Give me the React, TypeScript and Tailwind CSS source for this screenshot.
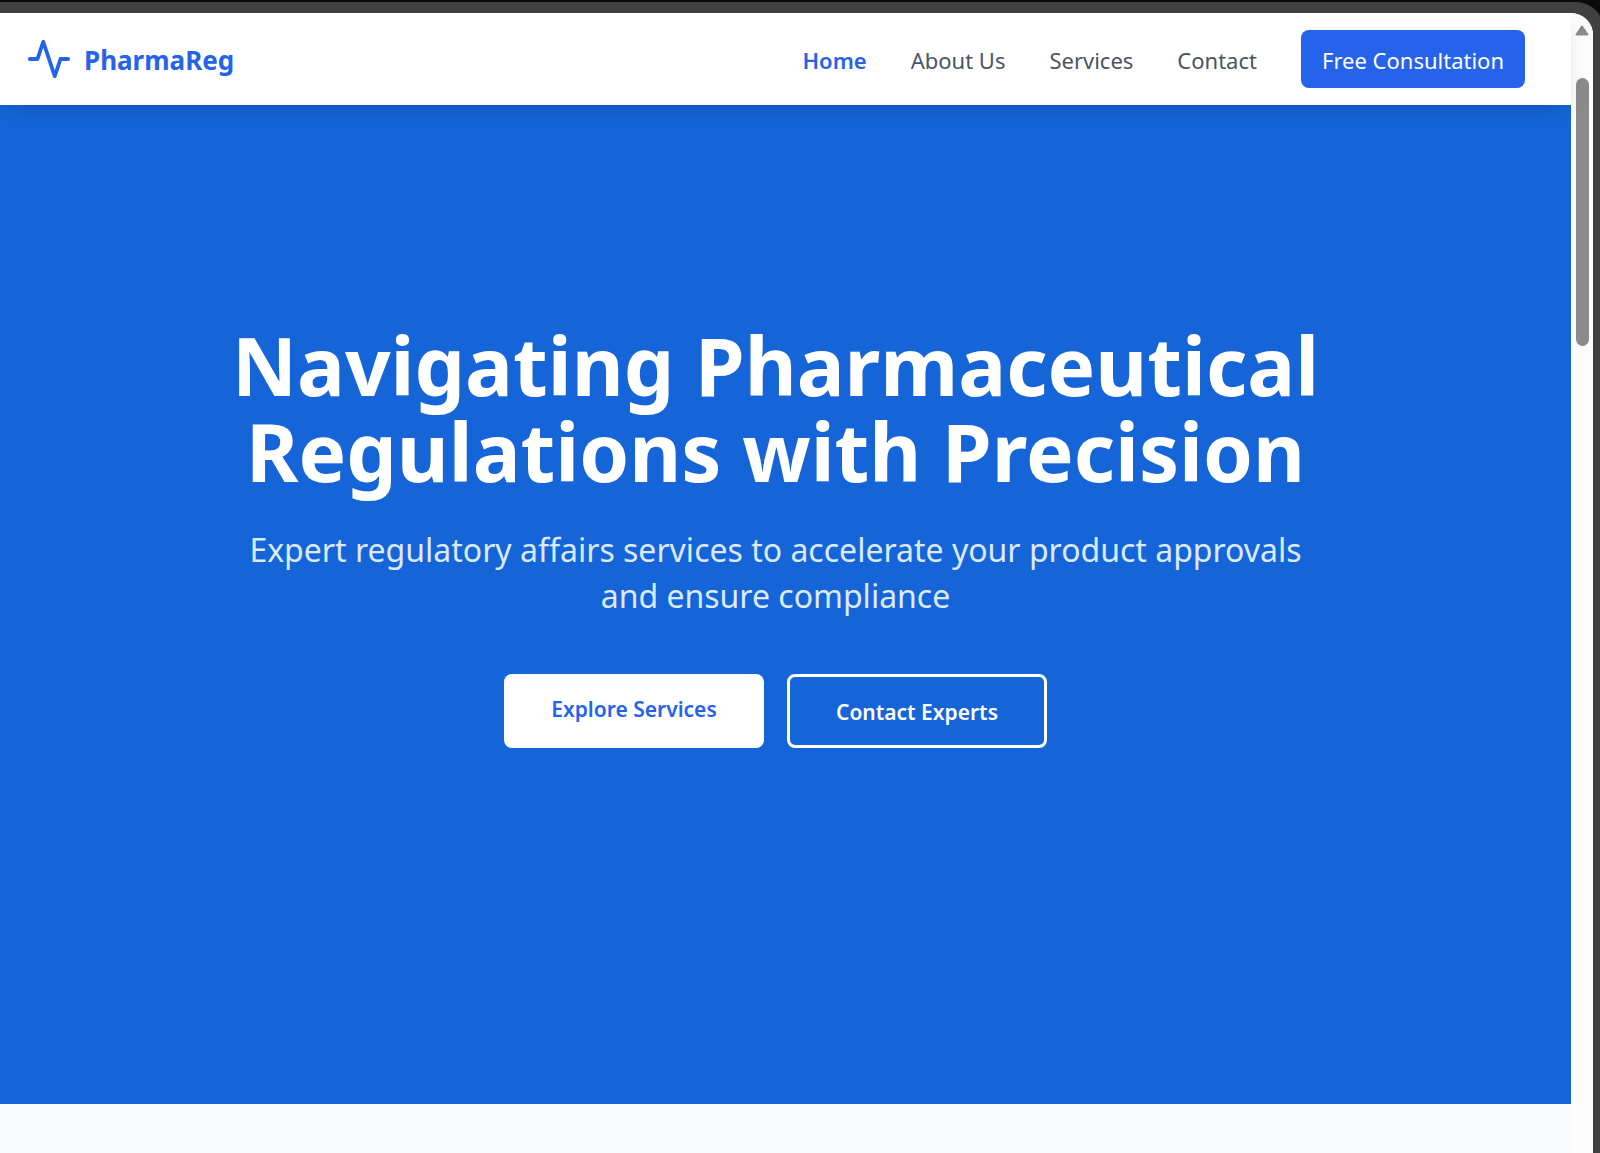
import React from "react";

const links = ["About Us", "Services", "Contact"];

function Logo() {
  return (
    <a href="#home" className="flex items-center gap-3 text-[#2563eb]">
      <svg
        viewBox="0 0 24 24"
        className="size-[46px]"
        fill="none"
        stroke="currentColor"
        strokeWidth="2"
        strokeLinecap="round"
        strokeLinejoin="round"
        aria-hidden="true"
      >
        <polyline points="22 12 18 12 15 21 9 3 6 12 2 12" />
      </svg>
      <span className="pt-0.5 text-[26px] leading-10 font-bold">PharmaReg</span>
    </a>
  );
}

function Navbar() {
  return (
    <header className="relative z-10 bg-white shadow-[0_14px_22px_-4px_rgba(0,0,0,0.08),0_4px_9px_-3px_rgba(0,0,0,0.08)]">
      <div className="flex items-center justify-between py-[17px] pr-[46px] pl-[26px]">
        <Logo />
        <nav className="flex items-center gap-11 text-[22px] leading-[34px] whitespace-nowrap text-[#4b5563]">
          <a href="#home" className="pt-0.5 font-semibold text-[#2563eb]">
            Home
          </a>
          {links.map((label) => (
            <a key={label} href="#" className="pt-0.5">
              {label}
            </a>
          ))}
          <button type="button" className="rounded-lg bg-[#2563eb] px-[21px] pt-[13px] pb-[11px] text-white">
            Free Consultation
          </button>
        </nav>
      </div>
    </header>
  );
}

function Hero() {
  return (
    <section className="bg-[#1565d9] pt-[217px] pr-5 pb-[356px] text-center text-white">
      <h1 className="text-[80px] leading-[86px] font-bold">
        Navigating Pharmaceutical
        <br />
        Regulations with Precision
      </h1>
      <p className="mt-[33px] text-[32px] leading-[46px] text-blue-100">
        Expert regulatory affairs services to accelerate your product approvals
        <br />
        and ensure compliance
      </p>
      <div className="mt-[55px] flex justify-center gap-[23px] text-[21px] leading-[34px] font-semibold">
        <button type="button" className="w-[260px] rounded-lg bg-white pt-[18px] pb-[22px] text-[#2563eb]">
          Explore Services
        </button>
        <button type="button" className="w-[260px] rounded-lg border-3 border-white pt-[18px] pb-4">
          Contact Experts
        </button>
      </div>
    </section>
  );
}

function ScrollTrack() {
  return (
    <div className="flex w-[22px] shrink-0 flex-col items-center bg-[#fcfcfc] pt-3" aria-hidden="true">
      <svg viewBox="0 0 14 11" className="h-[11px] w-[14px]">
        <path d="M7 1.5 12.5 9.5H1.5Z" fill="#8b8b8b" stroke="#8b8b8b" strokeWidth="2" strokeLinejoin="round" />
      </svg>
      <div className="mt-[42px] h-[268px] w-[13px] rounded-full bg-[#8b8b8b]" />
    </div>
  );
}

export default function App() {
  return (
    <div className="flex min-h-screen flex-col overflow-hidden bg-[#0a0a0a] pt-0.5 font-['Noto_Sans',sans-serif]">
      <div className="-mr-1 flex grow rounded-tr-[28px] bg-[#404040] pt-[11px] pr-[11px]">
        <div className="flex grow overflow-hidden rounded-tr-[22px] bg-white">
          <main className="grow bg-[#f9fafb]">
            <Navbar />
            <Hero />
          </main>
          <ScrollTrack />
        </div>
      </div>
    </div>
  );
}
